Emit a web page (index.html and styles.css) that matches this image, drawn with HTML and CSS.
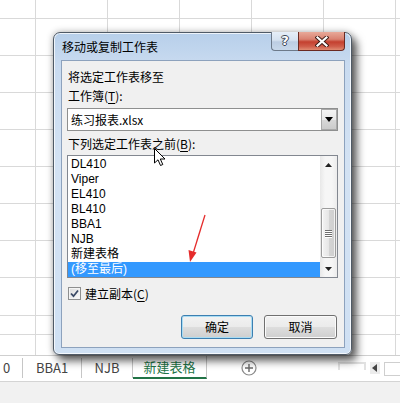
FILE: index.html
```html
<!DOCTYPE html>
<html>
<head>
<meta charset="utf-8">
<link rel="stylesheet" href="styles.css">
</head>
<body>
<div class="screen">
  <div class="sheet">
    <div class="row r19"></div>
    <div class="row r37"></div>
    <div class="row r37"></div>
    <div class="row r37"></div>
    <div class="row r37"></div>
    <div class="row r37"></div>
    <div class="row r37"></div>
    <div class="row r37"></div>
    <div class="row r38"></div>
    <div class="row r19"></div>
  </div>
  <div class="tabbar">
    <div class="tab t0">0</div>
    <div class="tab t1">BBA1</div>
    <div class="tab t2">NJB</div>
    <div class="tab active">新建表格</div>
    <div class="addtab">
      <svg width="16" height="16" viewBox="0 0 16 16"><circle cx="8" cy="8" r="7" fill="none" stroke="#8a8a8a" stroke-width="1.2"/><path d="M8 4v8M4 8h8" stroke="#6a6a6a" stroke-width="1.4"/></svg>
    </div>
    <div class="hscroll">
      <span class="grip"></span>
      <span class="larrow"><svg width="6" height="8" viewBox="0 0 6 8"><path d="M5 0v8L0 4z" fill="#444"/></svg></span>
      <span class="htrack"></span>
    </div>
  </div>
  <div class="status"></div>

  <div class="dialog">
    <div class="titlebar">
      <span class="title">移动或复制工作表</span>
      <div class="capbtns">
        <div class="cap help"><span>?</span></div>
        <div class="cap close">
          <svg width="14" height="11" viewBox="0 0 14 11"><path d="M2.5 1.5 L11.5 9.5 M11.5 1.5 L2.5 9.5" stroke="#3a1a14" stroke-width="4" stroke-linecap="square"/><path d="M2.5 1.5 L11.5 9.5 M11.5 1.5 L2.5 9.5" stroke="#fff" stroke-width="2.2" stroke-linecap="square"/></svg>
        </div>
      </div>
    </div>
    <div class="client">
      <div class="lbl l1">将选定工作表移至</div>
      <div class="lbl l2">工作簿(<u>T</u>):</div>
      <div class="combo">
        <span class="combo-text">练习报表.xlsx</span>
        <div class="ddbtn"><svg width="8" height="5" viewBox="0 0 8 5"><path d="M0 0h8L4 5z" fill="#000"/></svg></div>
      </div>
      <div class="lbl l3">下列选定工作表之前(<u>B</u>):</div>
      <div class="list">
        <div class="items">
          <div class="item">DL410</div>
          <div class="item">Viper</div>
          <div class="item">EL410</div>
          <div class="item">BL410</div>
          <div class="item">BBA1</div>
          <div class="item">NJB</div>
          <div class="item">新建表格</div>
          <div class="item sel">(移至最后)</div>
        </div>
        <div class="vscroll">
          <div class="sbtn"><svg width="7" height="4" viewBox="0 0 7 4"><path d="M0 4h7L3.5 0z" fill="#222"/></svg></div>
          <div class="track">
            <div class="thumb"><span></span><span></span><span></span><span></span></div>
          </div>
          <div class="sbtn"><svg width="7" height="4" viewBox="0 0 7 4"><path d="M0 0h7L3.5 4z" fill="#222"/></svg></div>
        </div>
      </div>
      <div class="check">
        <span class="box"><svg width="11" height="11" viewBox="0 0 11 11"><path d="M2 5.5 L4.5 8.2 L9 2.5" fill="none" stroke="#3b4a66" stroke-width="1.8"/></svg></span>
        <span>建立副本(<u>C</u>)</span>
      </div>
      <div class="buttons">
        <div class="btn default">确定</div>
        <div class="btn">取消</div>
      </div>
    </div>
  </div>

  <svg class="annot" width="400" height="403" viewBox="0 0 400 403">
    <path d="M205 215 L193.5 252" stroke="#e52b2b" stroke-width="1.3" fill="none"/>
    <path d="M190 262 L188.5 250 L196.5 252.5 Z" fill="#e52b2b"/>
  </svg>
  <svg class="cursor" width="13" height="19" viewBox="0 0 13 19">
    <path d="M0.5 0.5 L0.5 15 L4 11.8 L6.5 17.5 L8.8 16.5 L6.3 11 L11 11 Z" fill="#fff" stroke="#000" stroke-width="1" stroke-linejoin="round"/>
  </svg>
</div>
</body>
</html>
```

FILE: styles.css
```css
* { box-sizing: border-box; }
html, body { margin: 0; padding: 0; }
body {
  width: 400px;
  height: 403px;
  overflow: hidden;
  background: #fff;
  font-family: "Noto Sans CJK SC", "Noto Sans", sans-serif;
  font-size: 12px;
  color: #000;
}
.screen {
  position: relative;
  width: 400px;
  height: 403px;
  display: flex;
  flex-direction: column;
}

/* spreadsheet grid */
.sheet {
  height: 355px;
  display: flex;
  flex-direction: column;
  background-color: #fff;
  background-image: linear-gradient(to right, #d9d9d9 1px, transparent 1px);
  background-size: 72px 100%;
  background-position: 35px 0;
}
.row { border-bottom: 1px solid #d9d9d9; flex: none; }
.r19 { height: 19px; }
.r37 { height: 37px; }
.r38 { height: 38px; }

/* sheet tabs */
.tabbar {
  height: 26px;
  display: flex;
  align-items: flex-start;
  border-top: 1px solid #cfcfcf;
  background: #fff;
  color: #444;
  font-size: 13px;
}
.tab {
  height: 20px;
  margin-top: 2px;
  display: flex;
  align-items: center;
  justify-content: center;
  border-right: 1px solid #c6c6c6;
  line-height: 20px;
}
.t0 { width: 23px; justify-content: flex-start; padding-left: 3px; }
.t1 { width: 59px; }
.t2 { width: 51px; }
.tab.active {
  width: 74px;
  height: 23px;
  margin-top: 0;
  background: #fff;
  color: #217346;
  border-bottom: 2px solid #217346;
  padding-top: 1px;
}
.addtab {
  margin-left: 34px;
  margin-top: 4px;
  width: 16px;
  height: 16px;
  display: flex;
}
.hscroll {
  margin-left: auto;
  margin-top: 6px;
  display: flex;
  align-items: flex-start;
  gap: 4px;
}
.grip {
  width: 28px;
  height: 8px;
  border: 2px solid #e2e2e2;
  border-bottom: none;
}
.larrow {
  width: 10px;
  height: 12px;
  display: flex;
  align-items: center;
  justify-content: center;
  background: #ececec;
}
.htrack {
  width: 16px;
  height: 14px;
  border: 1px solid #cfcfcf;
  border-right: none;
  background: #fff;
}
.status {
  flex: 1;
  background: #f1f1f1;
  border-top: 1px solid #d4d4d4;
}

/* dialog window */
.dialog {
  position: absolute;
  left: 53px;
  top: 32px;
  width: 299px;
  height: 323px;
  border: 1px solid #4f5a66;
  border-radius: 7px 7px 6px 6px;
  background: linear-gradient(to bottom, #b7cfea 0%, #c9dbf0 10%, #d3e2f3 40%, #cfe0f3 100%);
  box-shadow: inset 0 0 0 1px rgba(255,255,255,0.75), 5px 6px 9px rgba(0,0,0,0.6), 0 0 7px rgba(0,0,0,0.3);
  padding: 0 6px 6px 7px;
  display: flex;
  flex-direction: column;
}
.titlebar {
  height: 27px;
  display: flex;
  justify-content: space-between;
  align-items: flex-start;
}
.title {
  line-height: 27px;
  padding-left: 1px;
  font-size: 12px;
  color: #000;
}
.capbtns {
  display: flex;
  margin-top: -1px;
}
.cap {
  height: 19px;
  display: flex;
  align-items: center;
  justify-content: center;
}
.help {
  width: 27px;
  border: 1px solid #6d7a8a;
  border-top: none;
  border-right: none;
  border-radius: 0 0 0 4px;
  background: linear-gradient(to bottom, #e6eef8 0%, #d6e2f0 45%, #bccde2 55%, #c8d8ea 100%);
}
.help span {
  font-family: "DejaVu Sans", sans-serif;
  font-weight: bold;
  font-size: 13px;
  color: #fff;
  line-height: 14px;
  text-shadow: 1px 0 0 #3b4656, -1px 0 0 #3b4656, 0 1px 0 #3b4656, 0 -1px 0 #3b4656;
}
.close {
  width: 47px;
  border: 1px solid #6b2a22;
  border-top: none;
  border-radius: 0 0 4px 0;
  background: linear-gradient(to bottom, #e8a999 0%, #d98271 40%, #c4402f 55%, #cf5d4a 80%, #e08b72 100%);
}

.client {
  height: 288px;
  background: #f0f0f0;
  border: 1px solid #8da2bd;
  padding: 7px 6px 0 5px;
  display: flex;
  flex-direction: column;
}
.lbl { padding-left: 1px; white-space: nowrap; }
.l1 { line-height: 18px; }
.l2 { line-height: 20px; }
.l3 { line-height: 20px; margin-top: 3px; }
u { text-decoration-thickness: 1px; text-underline-offset: 2px; }

.combo {
  margin-top: 2px;
  height: 23px;
  background: #fff;
  border: 1px solid #8e8f8f;
  display: flex;
  align-items: center;
  justify-content: space-between;
  padding-right: 0;
}
.combo-text { padding-left: 3px; line-height: 21px; }
.ddbtn {
  width: 16px;
  height: 21px;
  border: 1px solid #a9a9a9;
  background: linear-gradient(to bottom, #f4f4f4 0%, #e8e8e8 50%, #d8d8d8 51%, #cbcbcb 100%);
  display: flex;
  align-items: center;
  justify-content: center;
}

.list {
  margin-top: 1px;
  height: 123px;
  border: 1px solid #828790;
  background: #fff;
  display: flex;
}
.items {
  flex: 1;
  padding-top: 1px;
  font-family: "Liberation Sans", "Noto Sans CJK SC", sans-serif;
}
.item {
  height: 15px;
  line-height: 15px;
  padding-left: 3px;
  white-space: nowrap;
}
.item.sel {
  background: #3399ff;
  color: #fff;
}
.vscroll {
  width: 17px;
  display: flex;
  flex-direction: column;
  background: linear-gradient(to right, #e8e8e8, #f6f6f6 30%, #f6f6f6 70%, #ececec);
}
.sbtn {
  height: 17px;
  display: flex;
  align-items: center;
  justify-content: center;
}
.track {
  flex: 1;
  padding-top: 35px;
}
.thumb {
  height: 50px;
  margin: 0 1px 0 1px;
  border: 1px solid #9c9c9c;
  border-radius: 2px;
  background: linear-gradient(to right, #f4f4f4 0%, #e6e6e6 50%, #d4d4d4 51%, #cfcfcf 100%);
  box-shadow: inset 0 0 0 1px rgba(255,255,255,0.7);
  display: flex;
  flex-direction: column;
  align-items: center;
  justify-content: center;
  gap: 1px;
}
.thumb span {
  width: 7px;
  height: 1px;
  background: #6e6e6e;
  box-shadow: 0 1px 0 #fff;
}

.check {
  margin-top: 6px;
  height: 18px;
  display: flex;
  align-items: center;
  gap: 4px;
  padding-left: 1px;
}
.box {
  width: 13px;
  height: 13px;
  border: 1px solid #8e8f8f;
  background: linear-gradient(135deg, #dcdcdc, #fbfbfb);
  box-shadow: inset 0 0 0 1px #f4f4f4;
  display: flex;
  align-items: center;
  justify-content: center;
}

.buttons {
  margin-top: 13px;
  display: flex;
  justify-content: flex-end;
  gap: 11px;
  padding-right: 1px;
}
.btn {
  width: 72px;
  height: 24px;
  border: 1px solid #707070;
  border-radius: 3px;
  background: linear-gradient(to bottom, #f2f2f2 0%, #ebebeb 48%, #dddddd 52%, #cfcfcf 100%);
  box-shadow: inset 0 0 0 1px #fbfbfb;
  display: flex;
  align-items: center;
  justify-content: center;
  line-height: 22px;
}
.btn + .btn { width: 73px; }
.btn.default {
  border-color: #3c7fb1;
  box-shadow: inset 0 0 0 1px #a9dcf3;
}

/* overlays: annotation arrow and mouse pointer */
.annot {
  position: absolute;
  left: 0;
  top: 0;
  pointer-events: none;
}
.cursor {
  position: absolute;
  left: 154px;
  top: 148px;
}
```
